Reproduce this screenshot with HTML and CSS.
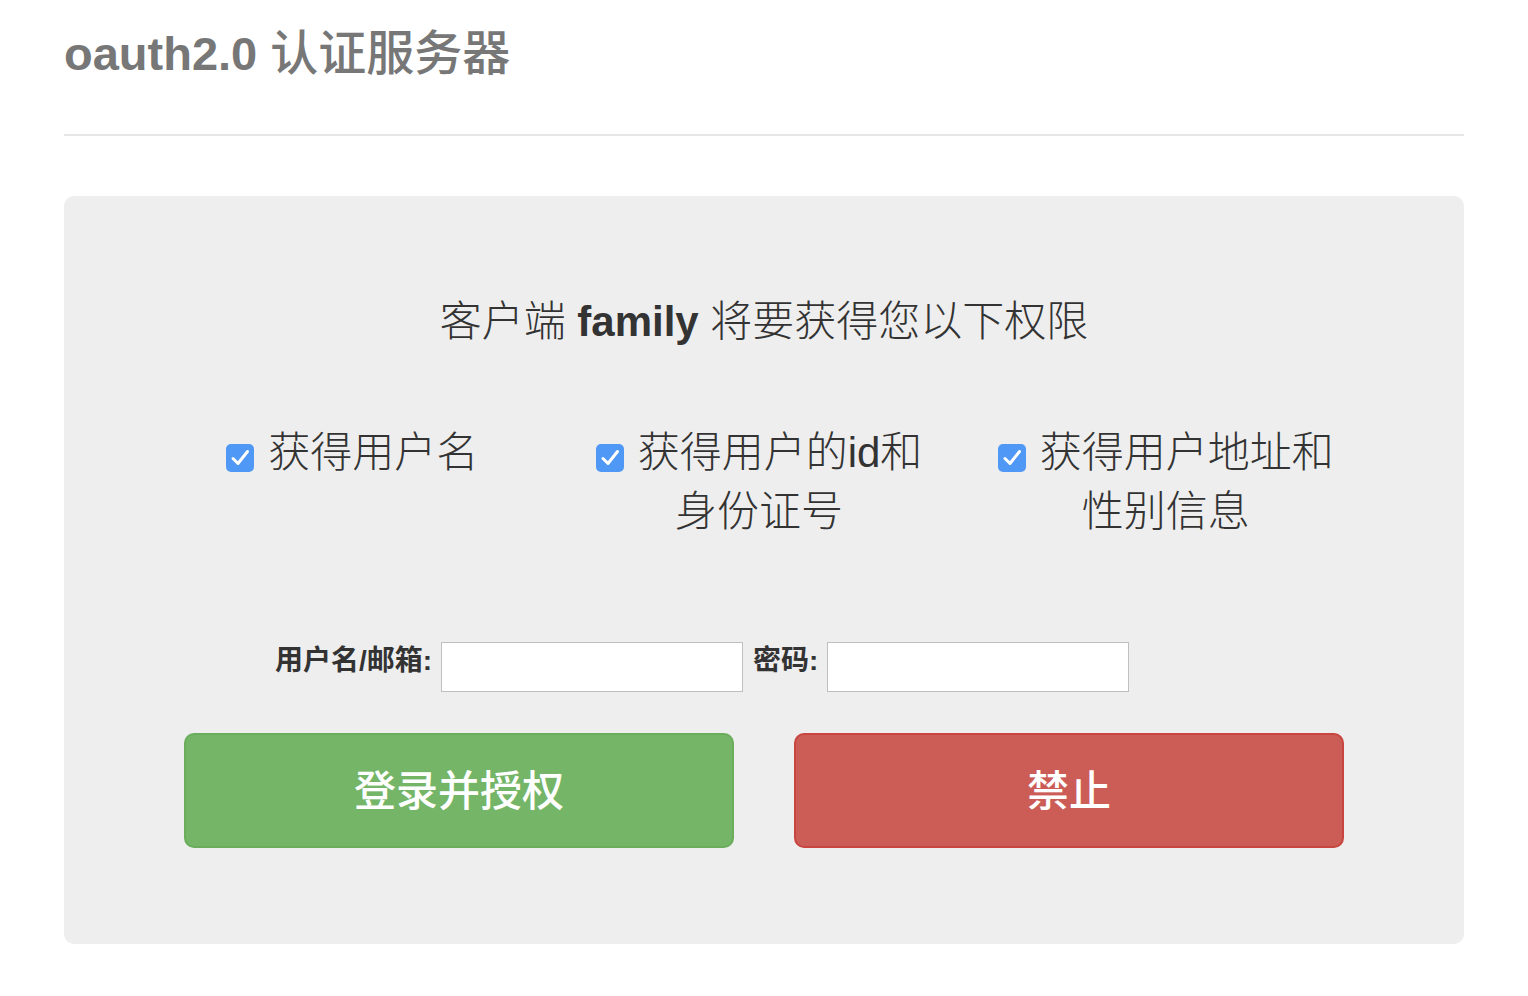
FILE: index.html
```html
<!DOCTYPE html>
<html lang="zh-CN">
<head>
<meta charset="utf-8">
<title>oauth2.0 认证服务器</title>
<link rel="stylesheet" href="styles.css">
</head>
<body>
<div class="container">
  <div class="page-header">
    <h1 class="title">oauth2.0 <span class="title-cjk">认证服务器</span></h1>
  </div>
  <div class="jumbotron">
    <p class="lead">客户端 <b>family</b> 将要获得您以下权限</p>
    <div class="scopes">
      <div class="scope">
        <label><span class="cb"><svg viewBox="0 0 28 28" width="28" height="28"><rect x="0" y="0" width="28" height="28" rx="5" fill="#4f98f6"/><path d="M7 14.5 L12 19.5 L21.5 7.5" fill="none" stroke="#fff" stroke-width="3" stroke-linecap="round" stroke-linejoin="round"/></svg></span>获得用户名</label>
      </div>
      <div class="scope">
        <label><span class="cb"><svg viewBox="0 0 28 28" width="28" height="28"><rect x="0" y="0" width="28" height="28" rx="5" fill="#4f98f6"/><path d="M7 14.5 L12 19.5 L21.5 7.5" fill="none" stroke="#fff" stroke-width="3" stroke-linecap="round" stroke-linejoin="round"/></svg></span>获得用户的id和身份证号</label>
      </div>
      <div class="scope">
        <label><span class="cb"><svg viewBox="0 0 28 28" width="28" height="28"><rect x="0" y="0" width="28" height="28" rx="5" fill="#4f98f6"/><path d="M7 14.5 L12 19.5 L21.5 7.5" fill="none" stroke="#fff" stroke-width="3" stroke-linecap="round" stroke-linejoin="round"/></svg></span>获得用户地址和性别信息</label>
      </div>
    </div>
    <form class="login">
      <div class="fields">
        <label class="field-label" for="user">用户名/邮箱:</label>
        <input class="field-input" id="user" type="text">
        <label class="field-label" for="pwd">密码:</label>
        <input class="field-input" id="pwd" type="password">
      </div>
      <div class="actions">
        <div class="action"><button type="button" class="btn btn-success">登录并授权</button></div>
        <div class="action"><button type="button" class="btn btn-danger">禁止</button></div>
      </div>
    </form>
  </div>
</div>
</body>
</html>
```

FILE: styles.css
```css
html, body {
  margin: 0;
  padding: 0;
  background: #fff;
}
body {
  font-family: "Liberation Sans", "Noto Sans CJK SC", sans-serif;
  color: #333;
}
.container {
  width: 1400px;
  margin: 0 auto;
}
.page-header {
  padding-top: 26px;
  padding-bottom: 52px;
  border-bottom: 2px solid #e6e6e6;
  margin-bottom: 60px;
}
.title {
  margin: 0;
  font-size: 47px;
  line-height: 56px;
  font-weight: 700;
  color: #777;
}
.title-cjk {
  font-weight: 500;
  font-size: 48px;
}
.jumbotron {
  background: #eee;
  border-radius: 10px;
  padding: 96px 120px;
}
.lead {
  margin: 0 0 72px;
  text-align: center;
  font-size: 42px;
  line-height: 59px;
  font-weight: 300;
  color: #333;
}
.lead b {
  font-weight: 700;
}
.scopes {
  display: flex;
  margin: 0 -30px;
}
.scope {
  flex: 1 1 0;
  padding: 0 40px 0 30px;
  text-align: center;
  font-size: 42px;
  line-height: 59px;
  font-weight: 300;
  color: #333;
}
.cb {
  display: inline-block;
  width: 28px;
  height: 28px;
  margin-right: 14px;
  vertical-align: -5px;
}
.cb svg {
  display: block;
}
.login {
  margin-top: 101px;
}
.fields {
  display: flex;
  align-items: center;
  height: 50px;
  padding-left: 91px;
}
.field-label {
  font-size: 28px;
  line-height: 30px;
  font-weight: 700;
  color: #333;
  padding-bottom: 12px;
  margin-right: 9px;
}
.field-input {
  box-sizing: border-box;
  width: 302px;
  height: 50px;
  border: 1px solid #bfbfbf;
  background: #fff;
  margin: 0 10px 0 0;
  padding: 0 10px;
  font-size: 24px;
}
.actions {
  display: flex;
  margin: 41px -30px 0;
}
.action {
  flex: 1 1 0;
  padding: 0 30px;
}
.btn {
  display: block;
  width: 100%;
  height: 115px;
  border-radius: 10px;
  font-family: "Liberation Sans", "Noto Sans CJK SC", sans-serif;
  font-size: 42px;
  font-weight: 500;
  color: #fff;
  cursor: pointer;
  padding: 0 0 6px;
}
.btn-success {
  background: #74b567;
  border: 2px solid #6aae5c;
}
.btn-danger {
  background: #cb5c56;
  border: 2px solid #c8463f;
}
```
